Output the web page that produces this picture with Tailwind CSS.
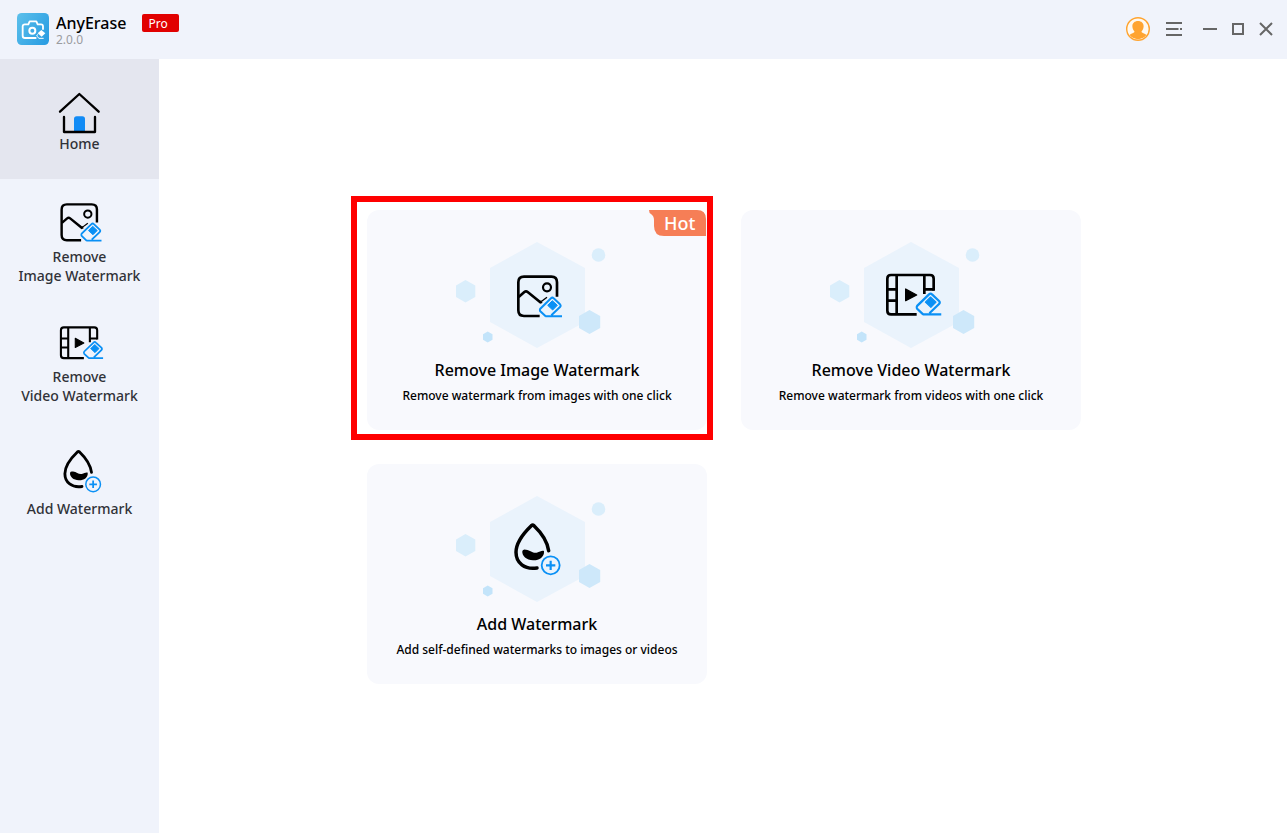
<!DOCTYPE html>
<html lang="en">
<head>
<meta charset="utf-8">
<title>AnyErase</title>
<meta name="viewport" content="width=device-width, initial-scale=1">
<script src="https://cdn.jsdelivr.net/npm/@tailwindcss/browser@4"></script>
</head>
<body class="min-h-screen flex flex-col bg-white font-['Noto_Sans','Open_Sans',sans-serif] font-medium text-black">

<svg width="0" height="0" class="absolute" aria-hidden="true">
  <defs>
    <symbol id="eraser" viewBox="0 0 72 66">
      <path d="M21 61 5 46Q2 42 5 38L37 7Q41 3 45 7L64 25Q68 29 64 33L38 58 M20 61H70" fill="none" stroke="#0a90f5" stroke-width="6"/>
      <path d="M41 14 56 28 42 42 27 28Z" fill="#0a90f5" stroke="#0a90f5" stroke-width="3" stroke-linejoin="round"/>
    </symbol>
    <symbol id="image" viewBox="510 248 144 138">
      <g fill="none" stroke="#000" stroke-width="8">
        <path d="M636 319V276Q636 259 619 259H537Q520 259 520 276V360Q520 377 537 377H584"/>
        <path d="M521 320 538 305Q543 301 548 305L586 336 591 334"/>
        <path d="M590 333 606 321" stroke-width="4"/>
        <circle cx="606" cy="291" r="12" stroke-width="6.5"/>
      </g>
      <use href="#eraser" x="581" y="317" width="72" height="66"/>
    </symbol>
    <symbol id="video" viewBox="192 112 174 138">
      <g fill="none" stroke="#000" stroke-width="8">
        <path d="M341 168V132Q341 121 330 121H213Q202 121 202 132V228Q202 239 213 239H290"/>
        <path d="M230 121V239M202 164H230M202 198H230M313 121V178M313 164H341"/>
      </g>
      <path d="M257 163V198L290 181Z" fill="#000" stroke="#000" stroke-width="4" stroke-linejoin="round"/>
      <use href="#eraser" x="286" y="171" width="80" height="74"/>
    </symbol>
    <symbol id="drop" viewBox="200 96 150 162">
      <path d="M310 182C306 155 286 126 266 107Q262 104 258 107C233 131 212 162 212 187C212 219 238 240 275 234" fill="none" stroke="#000" stroke-width="10.5" stroke-linecap="round"/>
      <path d="M231 183Q233 177 242 179C256 181 262 190 274 188C284 186 288 181 296 183C298 202 280 212 263 211C244 210 229 198 231 183Z"/>
      <g fill="none" stroke="#0a90f5">
        <circle cx="316" cy="226" r="27" stroke-width="5.5"/>
        <path d="M316 212V240M302 226H330" stroke-width="6.5"/>
      </g>
    </symbol>
    <symbol id="cells" viewBox="455 242 164 106">
      <path d="M537 242 585 268V322L537 348 490 322V268Z" fill="#eaf3fc"/>
      <circle cx="598.5" cy="255" r="6.8" fill="#daeefb"/>
      <path d="M465.5 280 475.3 285.5V297L465.5 302.5 456 297V285.5Z" fill="#daeefb"/>
      <path d="M589.5 310 600.2 316V328L589.5 334 579 328V316Z" fill="#cee8fa"/>
      <path d="M487.7 331.5 492.5 334.3V339.8L487.7 342.5 483 339.8V334.3Z" fill="#c3e4fa"/>
    </symbol>
  </defs>
</svg>

<header class="h-[59px] shrink-0 flex items-center justify-between bg-[#f0f3fb] pl-[17px] pr-3.5">
  <div class="flex items-start">
    <svg class="w-8 h-8 mr-[7px]" viewBox="0 0 96 96" aria-hidden="true">
      <defs><linearGradient id="logo" x1="0" x2="1" y1="0.2" y2="0.8"><stop stop-color="#58bdea"/><stop offset="1" stop-color="#2a9de2"/></linearGradient></defs>
      <rect width="96" height="96" rx="14" fill="url(#logo)"/>
      <path d="M78 48V40Q78 34 72 34H62L58 25H38L34 34H24Q17 34 17 40V68Q17 75 24 75H56" fill="none" stroke="#fff" stroke-width="5.5" stroke-linejoin="round" stroke-linecap="round"/>
      <circle cx="46" cy="53" r="9" fill="none" stroke="#fff" stroke-width="6"/>
      <path d="M73 51 85 61 74 71 62 61Z" fill="#fff"/>
      <path d="M62 64 59 69 66 76H80" fill="none" stroke="#fff" stroke-width="3"/>
    </svg>
    <div>
      <h1 class="text-base leading-5 font-medium">AnyErase</h1>
      <p class="text-xs leading-[14px] font-normal text-[#9b9ca0]">2.0.0</p>
    </div>
    <span class="ml-4 mt-px w-[37px] h-[18px] rounded-xs bg-[#e10000] pl-1.5 text-xs leading-5 font-normal text-white">Pro</span>
  </div>
  <div class="flex items-center pb-0.5">
    <button type="button" aria-label="Account" class="mr-4">
      <svg class="w-6 h-6" viewBox="0 0 24 24" aria-hidden="true">
        <circle cx="12" cy="12" r="11.3" fill="#fff9f0" stroke="#ffa430" stroke-width="1.4"/>
        <path d="M12 4C15.6 4 17.9 6.4 17.6 9.8C17.4 12 16.6 13.4 15.5 14.5C15.6 16 18 16 20.4 18A10.5 10.5 0 0 1 3.6 18C6 16 8.4 16 8.5 14.5C7.4 13.4 6.6 12 6.4 9.8C6.1 6.4 8.4 4 12 4Z" fill="#ffa430"/>
      </svg>
    </button>
    <button type="button" aria-label="Menu" class="mr-[21px]">
      <svg class="w-4 h-4" viewBox="0 0 16 16" fill="none" stroke="#666" stroke-width="2" aria-hidden="true"><path d="M0 2H16M0 8H12.5M14 8H16M0 14H16"/></svg>
    </button>
    <button type="button" aria-label="Minimize" class="mr-3.5">
      <svg class="w-3.5 h-3.5" viewBox="0 0 14 14" fill="none" stroke="#666" stroke-width="2" aria-hidden="true"><path d="M0 7H14"/></svg>
    </button>
    <button type="button" aria-label="Maximize" class="mr-3.5">
      <svg class="w-3.5 h-3.5" viewBox="0 0 14 14" fill="none" stroke="#666" stroke-width="2" aria-hidden="true"><path d="M2 2H12V12H2Z"/></svg>
    </button>
    <button type="button" aria-label="Close">
      <svg class="w-3.5 h-3.5" viewBox="0 0 14 14" fill="none" stroke="#666" stroke-width="2" aria-hidden="true"><path d="M1 1 13 13M13 1 1 13"/></svg>
    </button>
  </div>
</header>

<div class="flex flex-1">
  <nav class="w-[159px] shrink-0 bg-[#f0f3fb] text-sm leading-[19px] text-[#303238] text-center">
    <a href="#home" aria-current="page" class="flex h-[120px] flex-col items-center bg-[#e4e6ef] pt-[33px]">
      <svg class="w-[43px] h-[42px]" viewBox="174 36 129 126" aria-hidden="true">
        <path d="M222 156V117Q222 109 230 109H247Q255 109 255 117V156Z" fill="#118bf5"/>
        <g fill="none" stroke="#000" stroke-width="7" stroke-linejoin="round" stroke-linecap="round">
          <path d="M180 95 238 42 296 95"/><path d="M192 111V156H285V111"/>
        </g>
      </svg>
      Home
    </a>
    <a href="#image-watermark" class="flex h-[120px] flex-col items-center gap-1 pt-[22px]">
      <svg class="w-[45px] h-[42px] ml-0.5" aria-hidden="true"><use href="#image"/></svg>
      <span>Remove<br>Image Watermark</span>
    </a>
    <a href="#video-watermark" class="flex h-[120px] flex-col items-center gap-1.5 pt-[26px]">
      <svg class="w-[46px] h-9 ml-0.5" aria-hidden="true"><use href="#video"/></svg>
      <span>Remove<br>Video Watermark</span>
    </a>
    <a href="#add-watermark" class="flex h-[120px] flex-col items-center gap-1.5 pt-[30px]">
      <svg class="w-[42px] h-11 ml-1" aria-hidden="true"><use href="#drop"/></svg>
      <span>Add Watermark</span>
    </a>
  </nav>

  <main class="flex flex-1 justify-center items-start pt-[151px] pl-0.5">
    <div class="grid grid-cols-[340px_340px] gap-[34px]">
      <div class="relative">
        <button type="button" class="flex w-full h-[220px] flex-col items-center rounded-xl bg-[#f8f9fd] pt-8">
          <svg class="w-[164px] h-[106px]" viewBox="455 242 164 106" aria-hidden="true">
            <use href="#cells" x="455" y="242" width="164" height="106"/>
            <use href="#image" x="515" y="273" width="48" height="46"/>
          </svg>
          <span class="mt-2.5 text-base leading-6">Remove Image Watermark</span>
          <span class="mt-1 text-xs leading-5">Remove watermark from images with one click</span>
        </button>
        <div class="absolute top-0 right-px w-[57px] h-[26px] pl-[15px] text-lg leading-[27px] text-white">
          <svg class="absolute inset-0 w-full h-full" viewBox="0 0 57 26" aria-hidden="true"><path d="M0 0H48Q57 0 57 9V26H15Q5 26 5 16V10Q5 6 2 4Q0 3 0 0Z" fill="#f67e56"/></svg>
          <span class="relative">Hot</span>
        </div>
        <div class="absolute -top-3.5 -left-4 -right-1.5 -bottom-2.5 border-6 border-[#ff0000] pointer-events-none"></div>
      </div>
      <button type="button" class="flex h-[220px] flex-col items-center rounded-xl bg-[#f8f9fd] pt-8">
        <svg class="w-[164px] h-[106px]" viewBox="455 242 164 106" aria-hidden="true">
          <use href="#cells" x="455" y="242" width="164" height="106"/>
          <use href="#video" x="510" y="272" width="58" height="46"/>
        </svg>
        <span class="mt-2.5 text-base leading-6">Remove Video Watermark</span>
        <span class="mt-1 text-xs leading-5">Remove watermark from videos with one click</span>
      </button>
      <button type="button" class="flex h-[220px] flex-col items-center rounded-xl bg-[#f8f9fd] pt-8">
        <svg class="w-[164px] h-[106px]" viewBox="455 242 164 106" aria-hidden="true">
          <use href="#cells" x="455" y="242" width="164" height="106"/>
          <use href="#drop" x="512" y="268" width="50" height="54"/>
        </svg>
        <span class="mt-2.5 text-base leading-6">Add Watermark</span>
        <span class="mt-1 text-xs leading-5">Add self-defined watermarks to images or videos</span>
      </button>
    </div>
  </main>
</div>
</body>
</html>
